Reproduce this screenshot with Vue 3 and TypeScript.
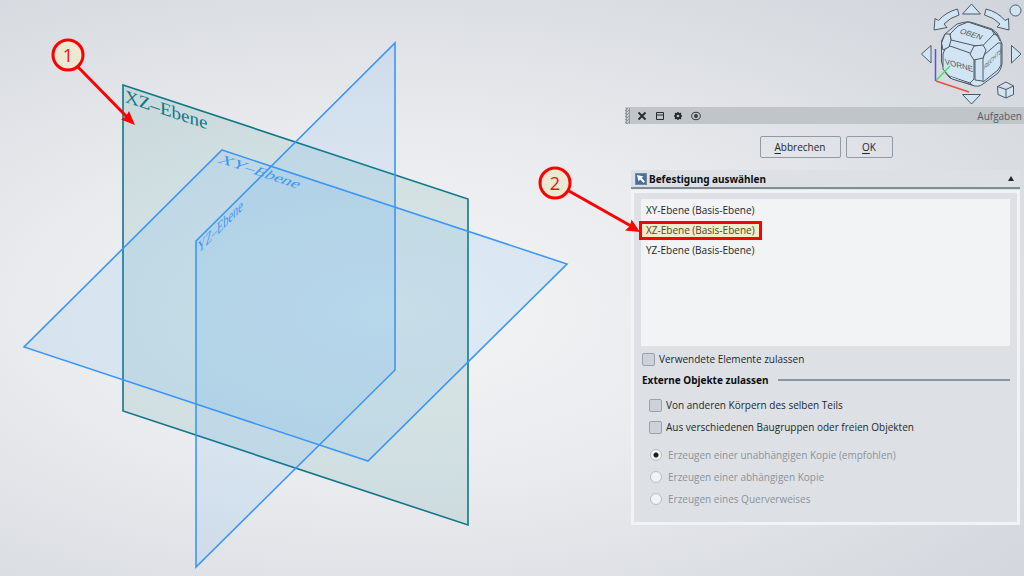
<script setup lang="ts">
import { ref } from 'vue'

interface Plane {
  id: string
  label: string
  points: string
  matrix: string
  tone: 'teal' | 'blue'
}

const planes: Plane[] = [
  { id: 'XZ', label: 'XZ–Ebene', points: '123,85 468,199 468,525 123,411', matrix: 'matrix(1.058 .35 0 1 125 102)', tone: 'teal' },
  { id: 'XY', label: 'XY–Ebene', points: '222,150 567,264 368,461 24,347', matrix: 'matrix(1.058 .35 -.61 .604 217 162)', tone: 'blue' },
  { id: 'YZ', label: 'YZ–Ebene', points: '395,43 395,370 196,567 196,241', matrix: 'matrix(.61 -.606 0 1 198 254)', tone: 'blue' },
]

const references = ['XY-Ebene (Basis-Ebene)', 'XZ-Ebene (Basis-Ebene)', 'YZ-Ebene (Basis-Ebene)']
const selected = ref(references[1])
const allowUsed = ref(false)
const otherBodies = ref(false)
const otherParts = ref(false)
const copyMode = ref('independent')
const copyModes = [
  { value: 'independent', label: 'Erzeugen einer unabhängigen Kopie (empfohlen)' },
  { value: 'dependent', label: 'Erzeugen einer abhängigen Kopie' },
  { value: 'link', label: 'Erzeugen eines Querverweises' },
]
</script>

<template>
  <main class="workspace">
    <svg class="scene" viewBox="0 0 1024 576" preserveAspectRatio="xMinYMin meet" aria-label="3D-Ansicht">
      <polygon v-for="p in planes" :key="p.id" :points="p.points" :class="['plane', p.tone]" />
      <text v-for="p in planes" :key="p.label" :transform="p.matrix" :class="['plane-label', p.tone]">{{ p.label }}</text>
    </svg>

    <div class="side">
      <div class="nav">
        <svg class="nav-cube" viewBox="0 0 120 107" width="120" height="107" aria-label="Navigationswürfel">
          <g class="nav-shape">
            <path d="M67.500 4 L76.500 14 H58.500 Z" />
            <path d="M67.500 104 L76.500 94.500 H58.500 Z" />
            <path d="M17.500 54 L27 45.500 V63 Z" />
            <path d="M117 54 L107.500 45.500 V63 Z" />
            <circle cx="111.500" cy="10.500" r="5.500" />
            <path d="M53.500 9 Q42 12 34.500 20.500 L31 18.500 L30 30 L43 27.500 L40 24 Q46 17.500 55 15 Z" />
            <path d="M82 9 Q94 12 101 20.500 L104.500 18.500 L105 30 L93 27 L96 24 Q90 17.500 80.500 15 Z" />
            <path d="M93.500 86.500 L102 82 L109.500 86 V94.500 L102 98 L94 94.500 Z M93.500 86.500 L102 89.500 L109.500 86 M102 89.500 V98" />
            <path d="M59 22.500 Q65 21 68 22.500 L88 29 Q94 32 96 39 L98 44 V64 Q97 70 94 73 L79 84 Q74 88 68 85 L46 78 Q42 75 40 69 L37.500 62 V41 L41 34 L53 24 Z" />
            <path d="M54 26 L64 22 L88 30 L90 34 L79 45.500 L70 45.500 L47 40 L46 34 Z" />
            <path d="M41 49 L46 46 L66 53 L70 57 V79 L66 83 L45 76 L39 69 V54 Z" />
            <path d="M79 59 L80 55 L94 43 L97 43 V65 L94 70 L79 82 Z" />
            <path d="M70 46 L79 45 L82 50 L79 58 L70 60 L66 54 Z" />
            <path d="M41 34 L46 34 L47 40 L45 47 L39 50 L37.500 43 Z" />
            <path d="M88 30 L93 35 L96 41 M90 34 L94 36 M71 60 V80 L79 81 M66 83 L69 86 M45 76 L48 79 L68 85" />
          </g>
          <g class="cube-text">
            <text transform="matrix(.96 .3 -.5 .8 55 33)">OBEN</text>
            <text transform="matrix(1 .28 .1 1 41 64)">VORNE</text>
            <text class="side-text" transform="matrix(.7 -.7 -.1 1.200 80 70)">RECHTS</text>
          </g>
          <path d="M31.500 49 V81" stroke="#5252e8" />
          <path d="M32 80.500 L46 66" stroke="#43e65a" />
          <path d="M32 81 L65 92" stroke="#f34848" />
        </svg>
      </div>

      <header class="dock-title">
        <div class="dock-tools">
          <span class="grip"></span>
          <button type="button" aria-label="Schließen">
            <svg viewBox="0 0 10 10"><path d="M1.500 1.500 L8.500 8.500 M8.500 1.500 L1.500 8.500" stroke-width="1.800" /></svg>
          </button>
          <button type="button" aria-label="Abdocken">
            <svg viewBox="0 0 10 10"><path d="M1.500 1.500 H8.500 V8.500 H1.500 Z M1.500 4 H8.500" stroke-width="1" /></svg>
          </button>
          <button type="button" aria-label="Einstellungen">
            <svg viewBox="0 0 10 10"><circle cx="5" cy="5" r="2.300" stroke-width="2" /><path d="M5 1 V2.500 M5 7.500 V9 M1 5 H2.500 M7.500 5 H9 M2.100 2.100 L3 3 M7 7 L7.900 7.900 M7.900 2.100 L7 3 M3 7 L2.100 7.900" stroke-width="1.500" /></svg>
          </button>
          <button type="button" aria-label="Sichtbarkeit">
            <svg viewBox="0 0 10 10"><ellipse cx="5" cy="5" rx="4.300" ry="3.700" stroke-width=".9" /><circle cx="5" cy="5" r="1.200" stroke-width="1.400" /></svg>
          </button>
        </div>
        <span class="dock-name">Aufgaben</span>
      </header>

      <div class="actions">
        <button type="button" class="wide"><u>A</u>bbrechen</button>
        <button type="button"><u>O</u>K</button>
      </div>

      <section class="task">
        <h2>
          <svg class="pick" viewBox="0 0 12 12" width="12" height="12">
            <rect x=".5" y=".5" width="11" height="11" fill="#3c70b0" stroke="#7b8795" />
            <path d="M2 2 L8.500 3.500 L6.700 5 L10 8.500 L8.500 10 L5.200 6.500 L3.500 8.500 Z" fill="#fff" />
          </svg>
          <span>Befestigung auswählen</span>
          <button type="button" class="collapse" aria-label="Einklappen">
            <svg viewBox="0 0 6 5" width="6" height="5"><path d="M3 0 L6 5 H0 Z" fill="#22272c" /></svg>
          </button>
        </h2>
        <div class="task-body">
          <ul class="refs" role="listbox" aria-label="Befestigung">
            <li v-for="r in references" :key="r" role="option" :aria-selected="r === selected">
              <button type="button" :class="{ marked: r === selected }" @click="selected = r">{{ r }}</button>
            </li>
          </ul>
          <label class="opt"><input v-model="allowUsed" type="checkbox" />Verwendete Elemente zulassen</label>
          <h3>Externe Objekte zulassen</h3>
          <div class="group">
            <label class="opt"><input v-model="otherBodies" type="checkbox" />Von anderen Körpern des selben Teils</label>
            <label class="opt"><input v-model="otherParts" type="checkbox" />Aus verschiedenen Baugruppen oder freien Objekten</label>
            <div class="modes">
              <label v-for="m in copyModes" :key="m.value" class="opt off">
                <input v-model="copyMode" type="radio" name="copy" :value="m.value" disabled />{{ m.label }}
              </label>
            </div>
          </div>
        </div>
      </section>
    </div>

    <svg class="scene notes" viewBox="0 0 1024 576" preserveAspectRatio="xMinYMin meet">
      <path d="M78 67 L127 117" class="note-line" />
      <path d="M135 125 L121 119.500 L126 116.500 L129 111 Z" class="note-head" />
      <circle cx="68" cy="55" r="15" class="note-ring" />
      <text x="68" y="62">1</text>
      <path d="M569 191 L631 226" class="note-line" />
      <path d="M640 232 L625 230.500 L630 226 L631.500 219.500 Z" class="note-head" />
      <circle cx="555" cy="183" r="15" class="note-ring" />
      <text x="555" y="190">2</text>
    </svg>
  </main>
</template>

<style>
body {
  margin: 0;
}
</style>

<style scoped>
.workspace {
  position: relative;
  display: grid;
  grid-template-columns: minmax(0, 625fr) minmax(0, 399fr);
  min-height: 100vh;
  overflow: hidden;
  background: radial-gradient(ellipse at 38% 54%, #f3f4f5 0%, #e9ebee 40%, #dcdfe4 70%, #d0d5db 100%);
  font-family: "Open Sans", "Noto Sans", sans-serif;
  font-size: 10px;
  color: #22272c;
}
.scene {
  position: absolute;
  inset: 0;
  width: 100%;
  height: 100%;
}
.plane {
  stroke-width: 1.600;
}
.plane.teal {
  fill: rgba(24, 128, 132, 0.12);
  stroke: #117688;
}
.plane.blue {
  fill: rgba(51, 155, 255, 0.1);
  stroke: #3d96f5;
}
.plane-label {
  font-family: "Liberation Serif", serif;
  font-size: 17px;
}
.plane-label.teal {
  font-size: 18px;
  fill: #117688;
}
.plane-label.blue {
  fill: #3d96f5;
}
.notes {
  pointer-events: none;
}
.notes text {
  font-size: 18px;
  fill: #fb0d0d;
  text-anchor: middle;
}
.note-line {
  stroke: #fe0000;
  stroke-width: 3;
}
.note-head {
  fill: #fe0000;
}
.note-ring {
  fill: #ebe9d0;
  stroke: #fe0000;
  stroke-width: 3;
}
.side {
  position: relative;
  grid-column: 2;
}
.nav {
  display: flex;
  justify-content: flex-end;
  height: 107px;
}
.nav-cube {
  fill: none;
  stroke-width: 1.500;
}
.nav-shape {
  fill: #d0e4f3;
  stroke: #4d5963;
  stroke-width: 1;
  stroke-linejoin: round;
}
.cube-text {
  font-family: "Liberation Sans", sans-serif;
  font-size: 8px;
  fill: #4d5963;
}
.side-text {
  font-size: 6px;
}
button {
  padding: 0;
  border: 0;
  background: none;
  font: inherit;
  color: inherit;
}
.dock-title {
  display: flex;
  justify-content: space-between;
  align-items: center;
  height: 17px;
  padding-right: 2px;
  background: #c0c5ca;
}
.dock-tools {
  display: flex;
  align-items: center;
  gap: 8px;
}
.dock-tools button {
  width: 10px;
  height: 10px;
}
.dock-tools svg {
  display: block;
  fill: none;
  stroke: #252b31;
}
.grip {
  width: 5px;
  height: 16px;
  margin-right: -1px;
  background: repeating-conic-gradient(#8f969d 0 25%, #c6cbd0 0 50%) 0 0 / 3px 3px;
}
.dock-name {
  color: #555c64;
}
.actions {
  display: flex;
  justify-content: center;
  gap: 5px;
  padding: 12px 0 12px 3px;
}
.actions button {
  box-sizing: border-box;
  width: 47px;
  height: 22px;
  border: 1px solid #929ba4;
  border-radius: 2px;
}
.actions .wide {
  width: 81px;
}
.actions u {
  text-underline-offset: 2px;
}
.task {
  margin: 0 4px 0 6px;
}
h2,
h3 {
  font-family: "Noto Sans", "Open Sans", sans-serif;
  font-size: 10px;
  color: #0c0f12;
}
h2 {
  display: flex;
  align-items: center;
  gap: 2px;
  height: 17px;
  margin: 0;
  padding: 0 6px 0 4px;
  border-bottom: 2px solid #828c95;
  background: #dde1e5;
}
.collapse {
  display: flex;
  margin-left: auto;
}
.task-body {
  margin-top: 1px;
  padding: 6px 7px 12px;
  border: 3px solid #f1f3f5;
  background: #dde1e6;
}
.refs {
  box-sizing: border-box;
  min-height: 147px;
  margin: 0 0 2px;
  padding: 1px 0 0;
  background: #f1f3f5;
  list-style: none;
}
.refs li {
  display: flex;
  height: 20px;
  align-items: center;
}
.refs button {
  margin-left: -2px;
  padding: 0 4px;
  border: 3px solid transparent;
  line-height: 13px;
}
.refs .marked {
  border-color: #fe0000;
  background: #f0edca;
  color: #4a4a2c;
}
.opt {
  display: flex;
  align-items: center;
  gap: 4px;
  height: 22px;
}
.opt input {
  appearance: none;
  box-sizing: border-box;
  flex: none;
  width: 13px;
  height: 13px;
  margin: 0 0 0 1px;
  border: 1px solid #99a2aa;
  border-radius: 2px;
  background: #cdd2d9;
}
.opt input:checked {
  background: #3c70b0;
}
.opt input[type="radio"] {
  width: 12px;
  height: 12px;
  border-color: #b6bcc3;
  border-radius: 50%;
  background: #f1f3f5;
}
.opt input[type="radio"]:checked {
  background: radial-gradient(circle, #191d21 0 2px, #f1f3f5 3px);
}
.off {
  gap: 6px;
  color: #8b929b;
}
h3 {
  display: flex;
  align-items: center;
  gap: 10px;
  height: 20px;
  margin: 0;
  padding-left: 1px;
}
h3::after {
  content: "";
  flex: 1;
  height: 2px;
  background: #8b959e;
}
.group {
  padding: 4px 0 0 7px;
}
.modes {
  margin-top: 6px;
  padding-left: 1px;
}
</style>
